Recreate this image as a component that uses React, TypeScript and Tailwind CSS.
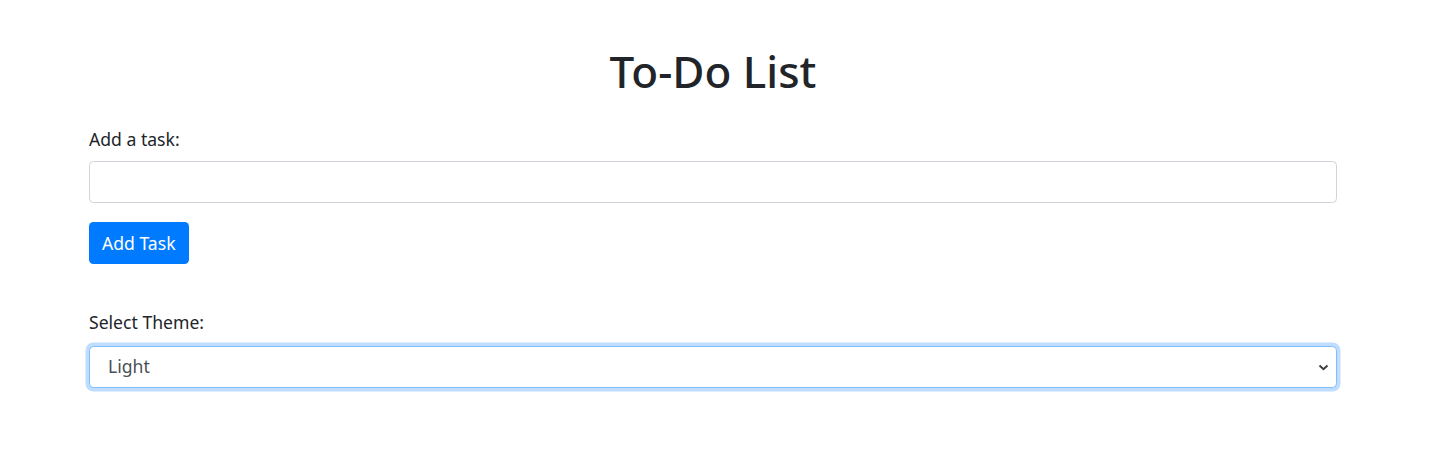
import { ChangeEvent, useState } from "react";

export default function App() {
  const [task, setTask] = useState("");
  const [theme, setTheme] = useState("light");

  return (
    <div className="min-h-[472px] bg-white font-['Segoe_UI','Noto_Sans',sans-serif] text-[#212529]">
      <div className="ml-[89px] w-[1248px] pt-[45px]">
        <h1 className="text-center text-[44px] font-medium leading-[1.2] mb-[28px]">To-Do List</h1>

        {/* add task */}
        <label htmlFor="task" className="block text-[17.6px] leading-[1.5] mb-[9px]">Add a task:</label>
        <input id="task" value={task} onChange={(e: ChangeEvent<HTMLInputElement>) => setTask(e.target.value)}
          className="block w-full h-[42px] px-[13px] text-[17.6px] text-[#495057] border border-[#ced4da] rounded-[4.4px] outline-none" />
        <button className="mt-[19px] h-[42px] px-[13px] rounded-[4.4px] bg-[#007bff] text-white text-[17.6px] leading-[1.5]">
          Add Task
        </button>

        {/* theme */}
        <label htmlFor="theme" className="block mt-[45px] text-[17.6px] leading-[1.5] mb-[10px]">Select Theme:</label>
        <div className="relative">
          <select id="theme" value={theme} onChange={(e: ChangeEvent<HTMLSelectElement>) => setTheme(e.target.value)}
            className="block w-full h-[42px] pl-[18px] pr-8 appearance-none bg-white text-[17.6px] text-[#495057] border border-[#80bdff] rounded-[4.4px] outline-none shadow-[0_0_0_3.5px_rgba(0,123,255,0.25)]">
            <option value="light">Light</option>
            <option value="dark">Dark</option>
          </select>
          <svg className="absolute right-[8px] top-[18px] pointer-events-none" width="11" height="7" viewBox="0 0 11 7">
            <polyline points="1.5,1.5 5.5,5.2 9.5,1.5" fill="none" stroke="#3c4043" strokeWidth="2" />
          </svg>
        </div>
      </div>
    </div>
  );
}
